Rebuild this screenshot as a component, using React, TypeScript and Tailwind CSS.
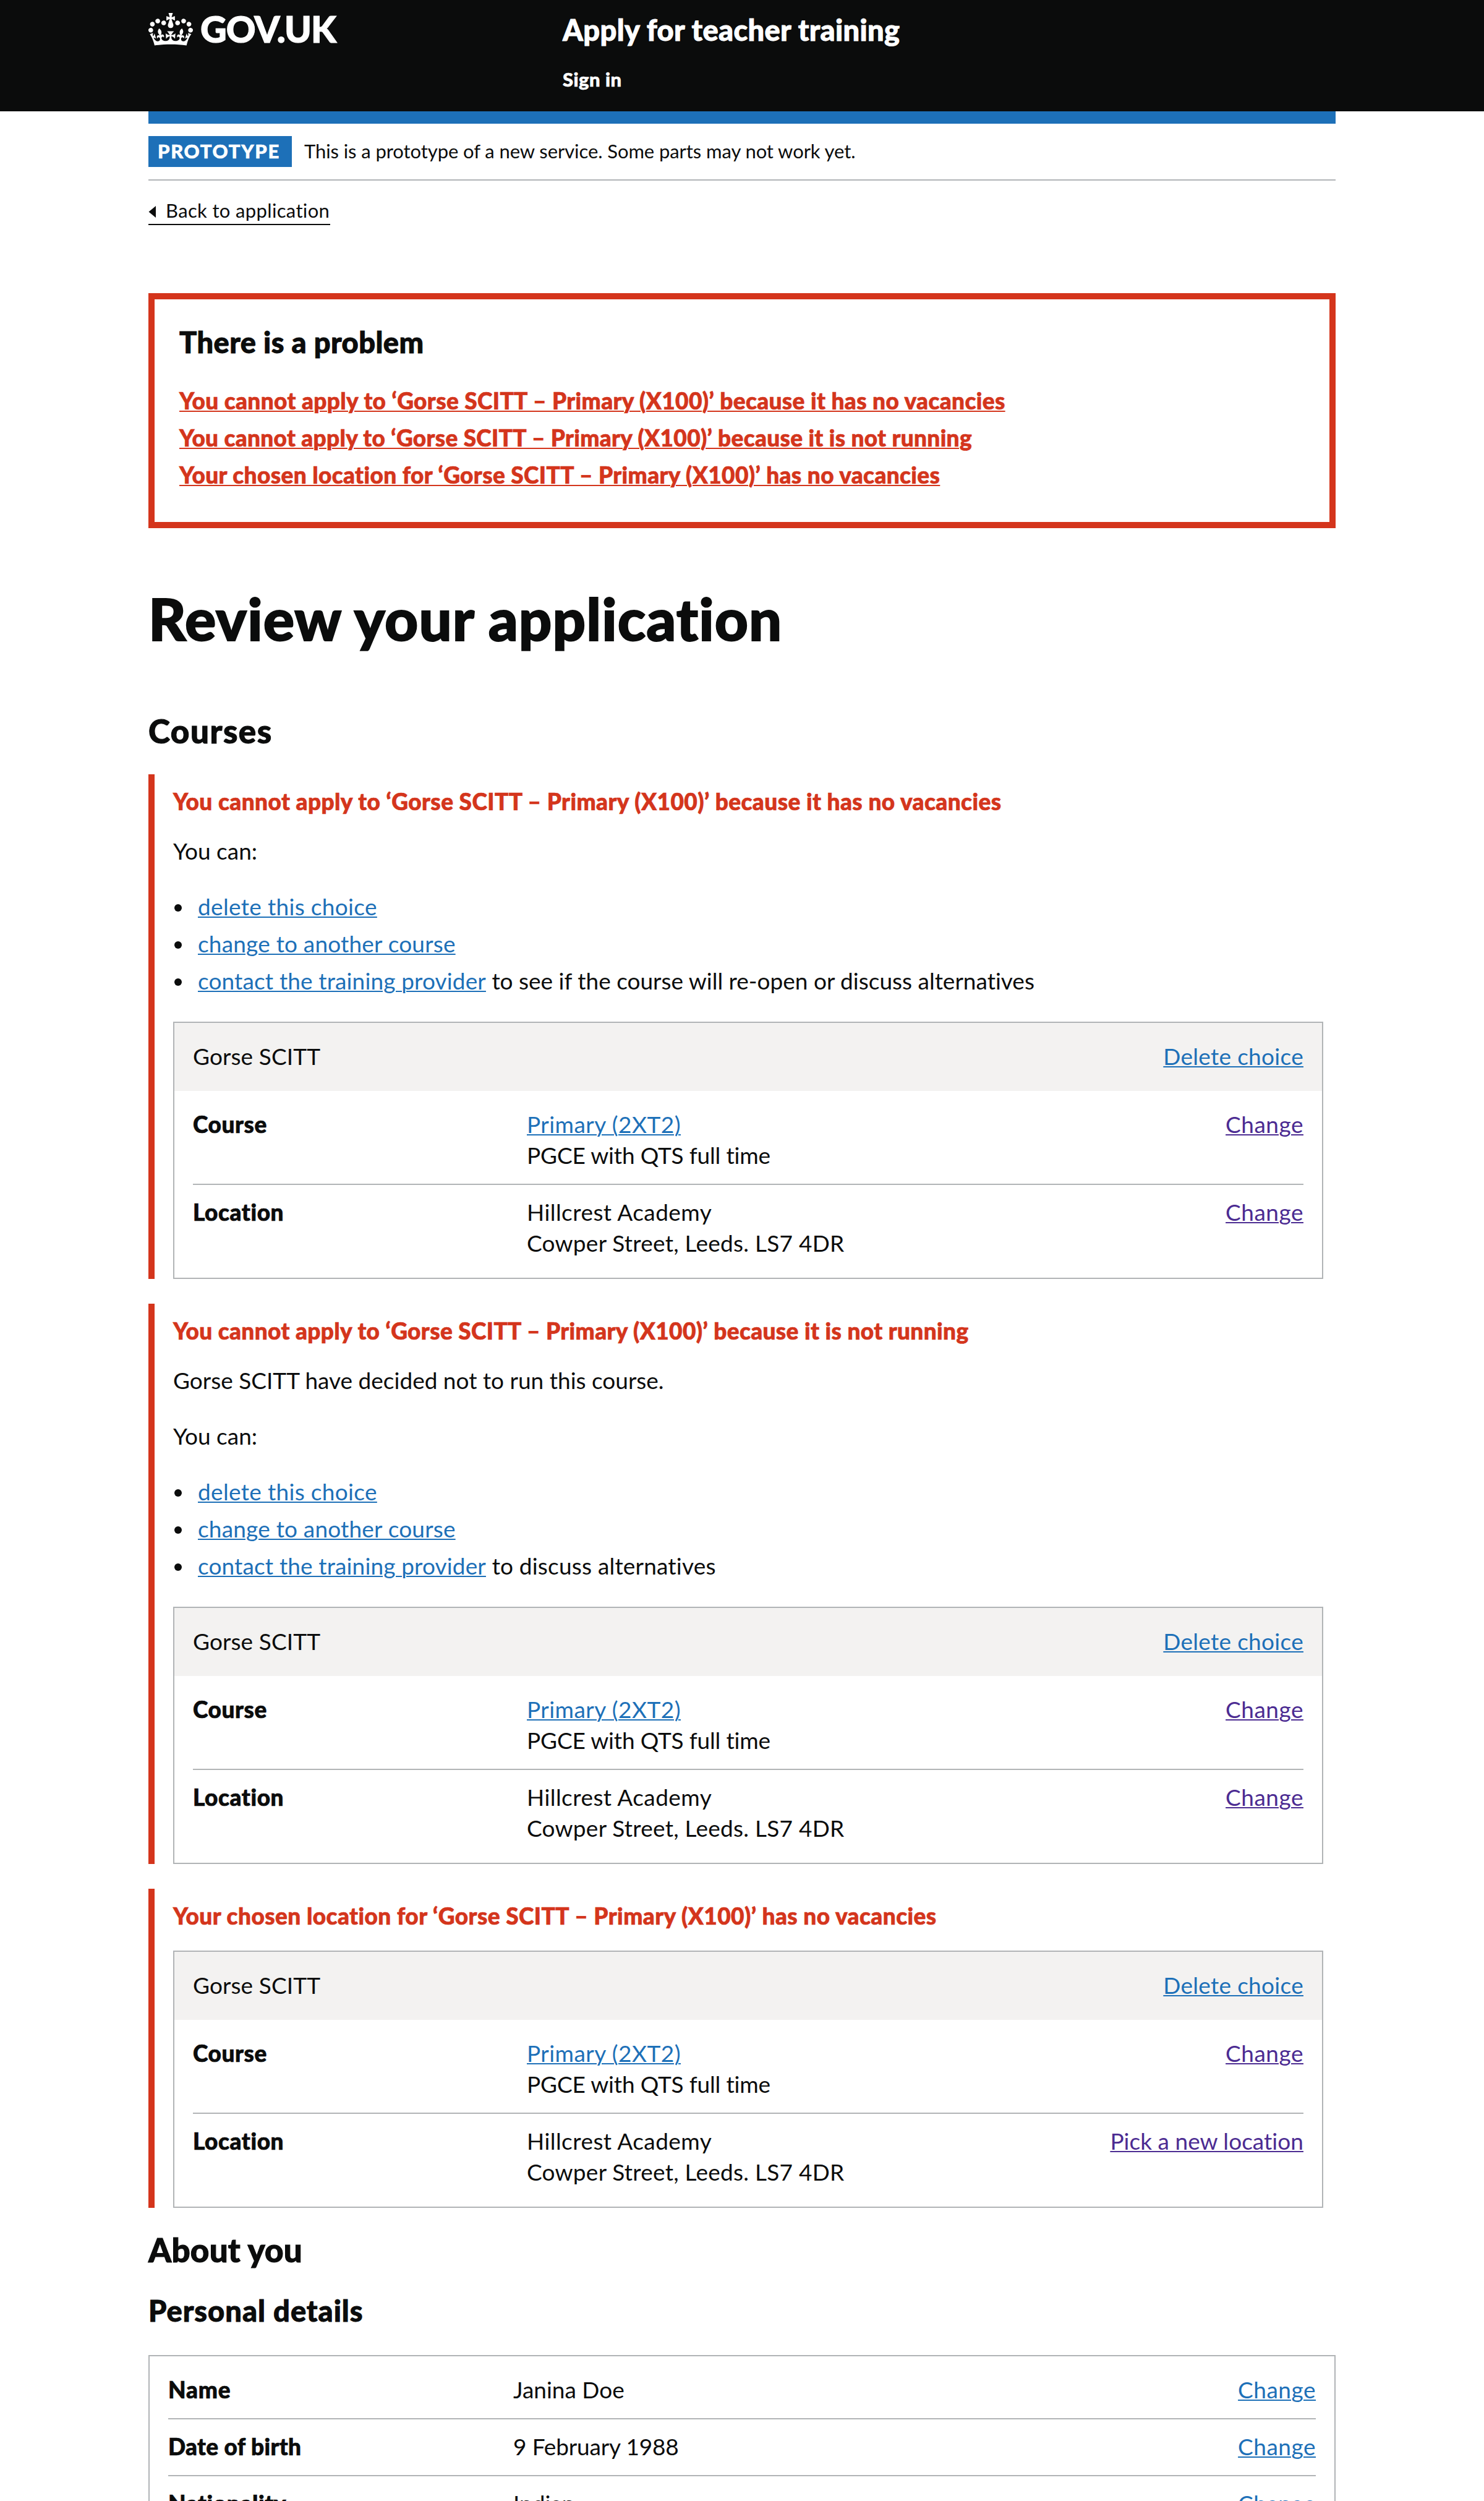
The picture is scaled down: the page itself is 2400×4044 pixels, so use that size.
import type { ReactNode } from "react";

type Action = { label: string; className: string };

const line = "block leading-[48px] pb-[2px] whitespace-nowrap";
const link = "underline decoration-2 underline-offset-[2px]";
const blue = "text-[#1d70b8]";
const visited = "text-[#4c2c92]";
const bold = "font-black [-webkit-text-stroke:0.02em_currentColor]";

function Crown() {
  return (
    <svg viewBox="0 0 132 97" className="mt-[4px] h-[53px] w-[72px]" fill="currentColor" aria-hidden="true">
      <path
        fillRule="evenodd"
        d="M25 30.2c3.5 1.5 7.7-.2 9.1-3.7 1.5-3.6-.2-7.8-3.9-9.2-3.6-1.4-7.6.3-9.1 3.9-1.4 3.5.3 7.5 3.9 9zM9 39.5c3.6 1.5 7.8-.2 9.2-3.7 1.5-3.6-.2-7.8-3.9-9.1-3.6-1.5-7.6.2-9.1 3.8-1.4 3.5.3 7.5 3.8 9zM4.4 57.2c3.5 1.5 7.7-.2 9.1-3.8 1.5-3.6-.2-7.7-3.9-9.1-3.5-1.5-7.6.3-9.1 3.8-1.4 3.5.3 7.6 3.9 9.1zm38.3-21.4c3.5 1.5 7.7-.2 9.1-3.8 1.5-3.6-.2-7.7-3.9-9.1-3.6-1.5-7.6.3-9.1 3.8-1.3 3.6.4 7.7 3.9 9.1zm64.4-5.6c-3.6 1.5-7.8-.2-9.1-3.7-1.5-3.6.2-7.8 3.8-9.2 3.6-1.4 7.7.3 9.2 3.9 1.3 3.5-.4 7.5-3.9 9zm15.9 9.3c-3.6 1.5-7.7-.2-9.1-3.7-1.5-3.6.2-7.8 3.7-9.1 3.6-1.5 7.7.2 9.2 3.8 1.5 3.5-.3 7.5-3.8 9zm4.7 17.7c-3.6 1.5-7.8-.2-9.2-3.8-1.5-3.6.2-7.7 3.9-9.1 3.6-1.5 7.7.3 9.2 3.8 1.3 3.5-.4 7.6-3.9 9.1zM89.3 35.8c-3.6 1.5-7.8-.2-9.2-3.8-1.4-3.6.2-7.7 3.9-9.1 3.6-1.5 7.7.3 9.2 3.8 1.4 3.6-.3 7.7-3.9 9.1zM69.7 17.7l8.9 4.7V9.3l-8.9 2.8c-.2-.3-.5-.6-.9-.9L72.4 0H59.6l3.5 11.2c-.3.3-.6.5-.9.9l-8.8-2.8v13.1l8.8-4.7c.3.3.6.7.9.9l-5 15.4v.1c-.2.8-.4 1.6-.4 2.4 0 4.1 3.1 7.5 7 8.1h.2c.3 0 .7.1 1 .1.4 0 .7 0 1-.1h.2c4-.6 7.1-4.1 7.1-8.1 0-.8-.1-1.7-.4-2.4V34l-5.1-15.4c.4-.2.7-.6 1-.9zM66 92.8c16.9 0 32.8 1.1 47.1 3.2 4-16.9 8.9-26.7 14-33.5l-9.6-3.4c1 4.9 1.1 7.2 0 10.2-1.5-1.4-3-4.3-4.2-8.7L108.6 76c2.8-2 5-3.2 7.5-3.3-4.4 9.4-10 11.9-13.6 11.2-4.3-.8-6.3-4.6-5.6-7.9 1-4.7 5.7-5.9 8-.5 4.3-8.7-3-11.4-7.6-8.8 7.1-7.2 7.9-13.5 2.1-21.1-8 6.1-8.1 12.3-4.5 20.8-4.7-5.4-12.1-2.5-9.5 6.2 3.4-5.2 7.9-2 7.2 3.1-.6 4.3-6.4 7.8-13.5 7.2-10.3-.9-10.9-8-11.2-13.8 2.5-.5 7.1 1.8 11 7.3L80.2 60c-4.1 4.4-8 5.3-12.3 5.4 1.4-4.4 8-11.6 8-11.6H55.5s6.4 7.2 7.9 11.6c-4.2-.1-8-1-12.3-5.4l1.4 16.4c3.9-5.5 8.5-7.7 10.9-7.3-.3 5.8-.9 12.8-11.1 13.8-7.2.6-12.9-2.9-13.5-7.2-.7-5 3.8-8.3 7.1-3.1 2.7-8.7-4.6-11.6-9.4-6.2 3.7-8.5 3.6-14.7-4.6-20.8-5.8 7.6-5 13.9 2.2 21.1-4.7-2.6-11.9.1-7.7 8.8 2.3-5.5 7.1-4.2 8.1.5.7 3.3-1.3 7.1-5.7 7.9-3.5.7-9-1.8-13.5-11.2 2.5.1 4.7 1.3 7.5 3.3l-4.7-15.4c-1.2 4.4-2.7 7.2-4.3 8.7-1.1-3-.9-5.3 0-10.2l-9.5 3.4c5 6.9 9.9 16.7 14 33.5 14.8-2.1 30.8-3.2 47.7-3.2z"
      />
    </svg>
  );
}

function Row({
  name,
  nameClass = "tracking-[0.6px]",
  keyWidth,
  action,
  divider = true,
  children,
}: {
  name: string;
  nameClass?: string;
  keyWidth: string;
  action: Action;
  divider?: boolean;
  children: ReactNode;
}) {
  return (
    <div className={divider ? "flex border-b-2 border-[#b1b4b6] pb-[20px]" : "flex"}>
      <dt className={`${line} ${keyWidth} ${nameClass} ${bold} shrink-0`}>{name}</dt>
      <dd className="flex-1">{children}</dd>
      <dd className={line}>
        <a className={`${link} ${action.className}`}>{action.label}</a>
      </dd>
    </div>
  );
}

function CourseCard({ locationAction }: { locationAction: Action }) {
  return (
    <section className="border-2 border-[#b1b4b6]">
      <header className="flex justify-between bg-[#f3f2f1] px-[30px] py-[30px]">
        <span className={`${line} tracking-[0.1px]`}>Gorse SCITT</span>
        <span className={line}>
          <a className={`${link} ${blue} tracking-[0.3px]`}>Delete choice</a>
        </span>
      </header>
      <dl className="flex flex-col gap-[20px] p-[30px]">
        <Row name="Course" keyWidth="w-[540px]" action={{ label: "Change", className: `${visited} tracking-[0.5px]` }}>
          <span className={line}>
            <a className={`${link} ${blue} tracking-[0.45px]`}>Primary (2XT2)</a>
          </span>
          <span className={`${line} tracking-[-0.17px]`}>PGCE with QTS full time</span>
        </Row>
        <Row name="Location" keyWidth="w-[540px]" divider={false} action={locationAction}>
          <span className={`${line} tracking-[0.45px]`}>Hillcrest Academy</span>
          <span className={`${line} tracking-[0.25px]`}>Cowper Street, Leeds. LS7 4DR</span>
        </Row>
      </dl>
    </section>
  );
}

function Bullet({ children }: { children: ReactNode }) {
  return (
    <li className="flex">
      <span className="mt-[20px] mr-[26px] ml-[2px] size-[12px] shrink-0 rounded-full bg-[#0b0c0c]" />
      <span className={line}>{children}</span>
    </li>
  );
}

function Choices({ after, afterClass }: { after: string; afterClass: string }) {
  return (
    <>
      <p className={`${line} mb-[40px]`}>You can:</p>
      <ul className="mb-[40px] flex flex-col gap-[10px]">
        <Bullet>
          <a className={`${link} ${blue} tracking-[0.33px]`}>delete this choice</a>
        </Bullet>
        <Bullet>
          <a className={`${link} ${blue} tracking-[0.19px]`}>change to another course</a>
        </Bullet>
        <Bullet>
          <a className={`${link} ${blue} tracking-[0.14px]`}>contact the training provider</a>
          <span className={afterClass}> {after}</span>
        </Bullet>
      </ul>
    </>
  );
}

function ErrorBlock({ title, titleClass, children }: { title: string; titleClass: string; children: ReactNode }) {
  return (
    <div className="border-l-[10px] border-[#d4351c] pt-[20px] pr-[20px] pl-[30px]">
      <p className={`${line} ${titleClass} ${bold} mb-[30px] text-[#d4351c]`}>{title}</p>
      {children}
    </div>
  );
}

const change: Action = { label: "Change", className: "text-[#4c2c92] tracking-[0.5px]" };
const changeBlue: Action = { label: "Change", className: "text-[#1d70b8] tracking-[0.5px]" };
const pickLocation: Action = { label: "Pick a new location", className: "text-[#4c2c92] tracking-[0.04px]" };

export default function App() {
  return (
    <div className="h-[4044px] w-[2400px] overflow-hidden bg-white font-[Lato,sans-serif] text-[37px] text-[#0b0c0c] [font-variant-ligatures:none]">
      <header className="h-[180px] bg-[#0b0c0c] text-white">
        <div className="mx-auto flex w-[1920px]">
          <div className="flex w-[670px] items-start gap-[12px] pt-[17px]">
            <Crown />
            <span className={`${bold} text-[59px] leading-[60px] tracking-[-0.9px]`}>GOV.UK</span>
          </div>
          <div className="pt-[18px]">
            <div className={`${bold} text-[47px] leading-[60px] tracking-[0.35px]`}>Apply for teacher training</div>
            <div className={`${bold} mt-[30px] text-[31px] leading-[40px] tracking-[0.5px]`}>Sign in</div>
          </div>
        </div>
      </header>

      <div className="mx-auto w-[1920px]">
        <div className="h-[20px] bg-[#1d70b8]" />
        <div className="flex border-b-2 border-[#b1b4b6] py-[20px] text-[31px] leading-[48px]">
          <strong className={`${bold} mr-[20px] h-[50px] w-[232px] bg-[#1d70b8] pl-[15px] tracking-[1.7px] text-white`}>
            PROTOTYPE
          </strong>
          <span className="tracking-[-0.08px]">This is a prototype of a new service. Some parts may not work yet.</span>
        </div>

        <a className="mt-[28px] flex h-[44px] w-[294px] items-start border-b-2 border-[#0b0c0c] text-[31px] leading-[40px] tracking-[0.35px] whitespace-nowrap">
          <svg viewBox="0 0 12 19" className="mt-[13px] mr-[16px] h-[19px] w-[12px] shrink-0" aria-hidden="true">
            <path d="M12 0V19L0.5 9.5Z" fill="#0b0c0c" />
          </svg>
          Back to application
        </a>

        <section className="mt-[110px] h-[380px] border-[10px] border-[#d4351c] px-[40px] pt-[39px]">
          <h2 className={`${bold} text-[47px] leading-[60px] tracking-[0.45px]`}>There is a problem</h2>
          <ul className={`${bold} mt-[41px] flex flex-col gap-[12px] leading-[48px] whitespace-nowrap text-[#d4351c]`}>
            <li>
              <a className={`${link} tracking-[0.38px]`}>
                You cannot apply to ‘Gorse SCITT – Primary (X100)’ because it has no vacancies
              </a>
            </li>
            <li>
              <a className={`${link} tracking-[0.32px]`}>
                You cannot apply to ‘Gorse SCITT – Primary (X100)’ because it is not running
              </a>
            </li>
            <li>
              <a className={`${link} tracking-[0.38px]`}>
                Your chosen location for ‘Gorse SCITT – Primary (X100)’ has no vacancies
              </a>
            </li>
          </ul>
        </section>

        <h1 className={`${bold} mt-[96px] text-[94px] leading-[100px] tracking-[1.05px]`}>Review your application</h1>

        <h2 className={`${bold} mt-[102px] mb-[40px] text-[53px] leading-[60px] tracking-[1.5px]`}>Courses</h2>

        <div className="flex flex-col gap-[40px]">
          <ErrorBlock
            title="You cannot apply to ‘Gorse SCITT – Primary (X100)’ because it has no vacancies"
            titleClass="tracking-[0.43px]"
          >
            <Choices after="to see if the course will re-open or discuss alternatives" afterClass="tracking-normal" />
            <CourseCard locationAction={change} />
          </ErrorBlock>
          <ErrorBlock
            title="You cannot apply to ‘Gorse SCITT – Primary (X100)’ because it is not running"
            titleClass="tracking-[0.38px]"
          >
            <p className={`${line} mb-[40px]`}>Gorse SCITT have decided not to run this course.</p>
            <Choices after="to discuss alternatives" afterClass="tracking-[0.2px]" />
            <CourseCard locationAction={change} />
          </ErrorBlock>
          <ErrorBlock
            title="Your chosen location for ‘Gorse SCITT – Primary (X100)’ has no vacancies"
            titleClass="tracking-[0.44px]"
          >
            <CourseCard locationAction={pickLocation} />
          </ErrorBlock>
        </div>

        <h2 className={`${bold} mt-[38px] text-[53px] leading-[60px] tracking-[0.2px]`}>About you</h2>
        <h3 className={`${bold} mt-[38px] mb-[42px] text-[47px] leading-[60px] tracking-[1px]`}>Personal details</h3>

        <dl className="flex flex-col gap-[20px] border-2 border-[#b1b4b6] p-[30px]">
          <Row name="Name" nameClass="tracking-[0.8px]" keyWidth="w-[558px]" action={changeBlue}>
            <span className={line}>Janina Doe</span>
          </Row>
          <Row name="Date of birth" nameClass="tracking-[0.35px]" keyWidth="w-[558px]" action={changeBlue}>
            <span className={`${line} tracking-[-0.15px]`}>9 February 1988</span>
          </Row>
          <Row name="Nationality" keyWidth="w-[558px]" action={changeBlue}>
            <span className={line}>Indian</span>
          </Row>
        </dl>
      </div>
    </div>
  );
}
